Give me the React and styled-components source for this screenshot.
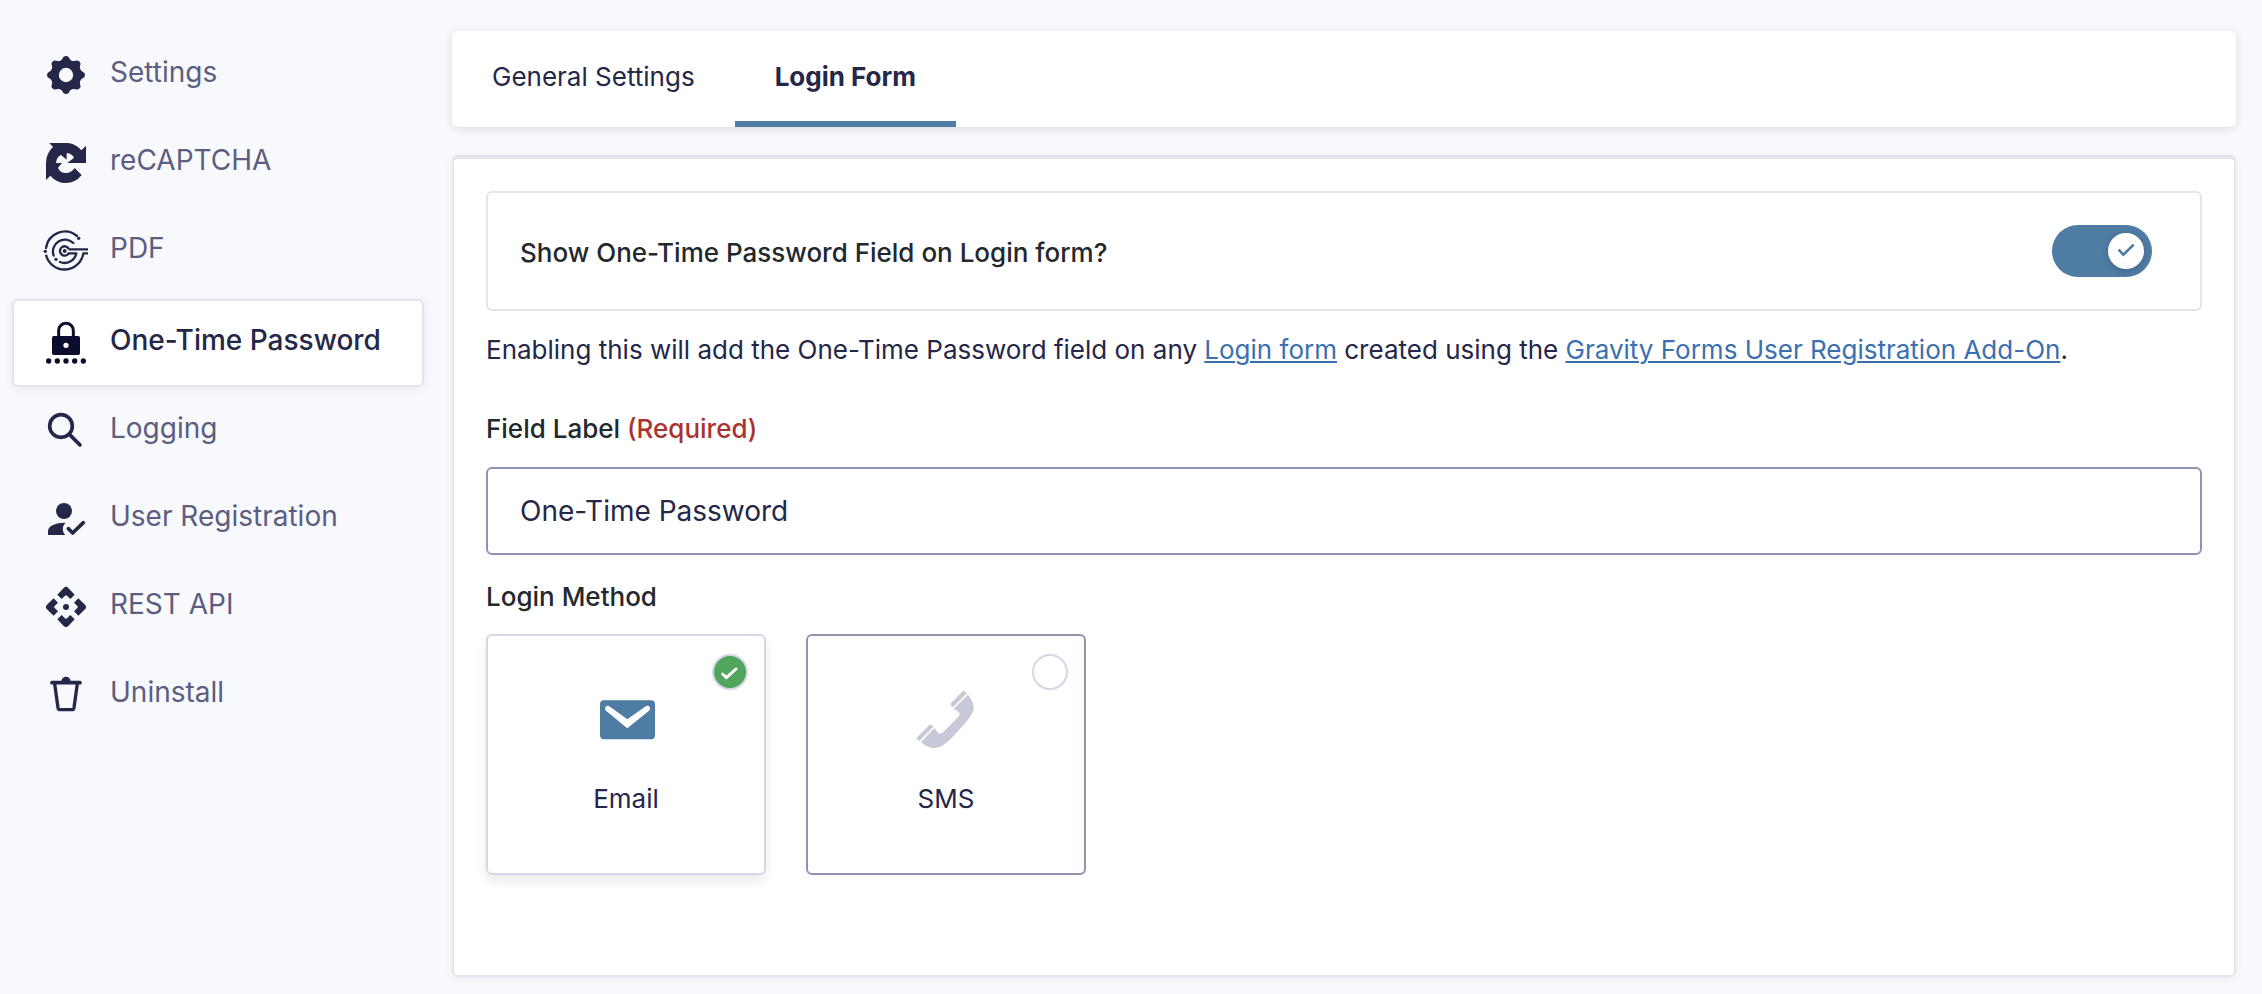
import React from "react";
import styled, { createGlobalStyle } from "styled-components";

const color = {
  page: "#f8f9fd",
  navy: "#242748",
  muted: "#5b5e80",
  text: "#23282d",
  accent: "#4f7ca3",
  link: "#3b70b0",
  danger: "#a9342f",
  line: "#e3e5ec",
  fieldLine: "#9092b2",
  softLine: "#d5d7e9",
  success: "#51a55c",
};

const GlobalStyle = createGlobalStyle`
  * { box-sizing: border-box; }
  body {
    margin: 0;
    background: ${color.page};
    color: ${color.navy};
    font-family: Inter, "Liberation Sans", sans-serif;
    font-size: 26px;
    line-height: 32px;
  }
`;

const Page = styled.div`
  display: flex;
  align-items: flex-start;
  gap: 28px;
  padding: 31px 26px 17px 12px;
`;

const Sidebar = styled.nav`
  flex: none;
  width: 412px;
`;

const NavList = styled.ul`
  margin: 0;
  padding: 0;
  list-style: none;
`;

const NavLink = styled.a`
  display: flex;
  align-items: center;
  gap: 24px;
  height: 88px;
  margin-top: ${(p) => (p.$active ? "4px" : "0")};
  padding: 0 32px;
  border: 2px solid ${(p) => (p.$active ? color.line : "transparent")};
  border-radius: 6px;
  background: ${(p) => (p.$active ? "#fff" : "transparent")};
  box-shadow: ${(p) => (p.$active ? "0 2px 8px rgba(36, 39, 72, 0.07)" : "none")};
  color: ${(p) => (p.$active ? color.navy : color.muted)};
  font-size: 28px;
  font-weight: ${(p) => (p.$active ? 500 : 400)};
  text-decoration: none;
`;

const NavText = styled.span`
  padding-bottom: 6px;
`;

const NavIcon = styled.svg`
  flex: none;
  width: 40px;
  height: 40px;
  overflow: visible;
  fill: ${color.navy};
`;

const Main = styled.main`
  flex: 1;
  min-width: 0;
`;

const Tabs = styled.nav`
  display: flex;
  border-radius: 6px;
  background: #fff;
  box-shadow: 0 2px 10px rgba(18, 25, 40, 0.12);
`;

const Tab = styled.a`
  padding: 30px 40px 28px;
  border-bottom: 6px solid ${(p) => (p.$active ? color.accent : "transparent")};
  color: ${color.navy};
  font-weight: ${(p) => (p.$active ? 700 : 400)};
  text-decoration: none;
`;

const Panel = styled.section`
  margin-top: 28px;
  padding: 32px 32px 100px;
  border: 2px solid ${color.line};
  border-top-width: 4px;
  border-radius: 6px;
  background: #fff;
  box-shadow: 0 2px 10px rgba(18, 25, 40, 0.05);
`;

const ToggleRow = styled.div`
  display: flex;
  align-items: center;
  justify-content: space-between;
  height: 120px;
  padding: 0 48px 0 32px;
  border: 2px solid ${color.line};
  border-radius: 6px;
`;

const ToggleLabel = styled.label`
  padding-top: 3px;
  color: ${color.text};
  font-weight: 500;
`;

const Switch = styled.span`
  position: relative;
  flex: none;
  display: flex;
`;

const SwitchInput = styled.input`
  appearance: none;
  width: 100px;
  height: 52px;
  margin: 0;
  border-radius: 26px;
  background: ${color.accent};
`;

const Knob = styled.svg`
  position: absolute;
  top: 8px;
  right: 8px;
  width: 36px;
  height: 36px;
  border-radius: 50%;
  background: #fff;
  box-shadow: 0 2px 6px rgba(18, 25, 40, 0.2);
  pointer-events: none;
`;

const Description = styled.p`
  margin: 23px 0 0;
`;

const Link = styled.a`
  color: ${color.link};
  text-decoration: underline;
  text-decoration-thickness: 2px;
  text-underline-offset: 2px;
`;

const Field = styled.div`
  margin-top: 47px;
`;

const FieldLabel = styled.label`
  display: block;
  color: ${color.text};
  font-weight: 500;
`;

const Required = styled.span`
  color: ${color.danger};
`;

const TextInput = styled.input`
  display: block;
  width: 100%;
  height: 88px;
  margin-top: 22px;
  padding: 0 32px;
  border: 2px solid ${color.fieldLine};
  border-radius: 6px;
  background: #fff;
  color: ${color.navy};
  font: inherit;
  font-size: 28px;
`;

const Choices = styled.fieldset`
  margin: 26px 0 0;
  padding: 0;
  border: 0;
`;

const ChoicesTitle = styled.legend`
  padding: 0;
  color: ${color.text};
  font-weight: 500;
`;

const ChoiceList = styled.div`
  display: flex;
  gap: 40px;
  margin-top: 21px;
`;

const Choice = styled.label`
  position: relative;
  display: flex;
  flex-direction: column;
  align-items: center;
  gap: 33px;
  width: 280px;
  padding: 54px 16px 58px;
  border: 2px solid ${(p) => (p.$selected ? color.softLine : color.fieldLine)};
  border-radius: 6px;
  background: #fff;
  box-shadow: ${(p) => (p.$selected ? "0 6px 12px rgba(18, 25, 40, 0.09)" : "none")};
`;

const Radio = styled.input`
  appearance: none;
  position: absolute;
  top: 18px;
  right: 16px;
  width: 36px;
  height: 36px;
  margin: 0;
  border: 2px solid ${color.softLine};
  border-radius: 50%;
  background: #fff;
  &:checked {
    background: ${color.success};
  }
`;

const RadioMark = styled.svg`
  position: absolute;
  top: 18px;
  right: 16px;
  width: 36px;
  height: 36px;
  pointer-events: none;
`;

const ChoiceArt = styled.svg`
  width: 60px;
  height: 60px;
`;

const quarters = [0, 90, 180, 270];
const eighths = [0, 45, 90, 135, 180, 225, 270, 315];

const icons = {
  gear: (
    <>
      <circle cx="60" cy="60" r="34" fill="none" stroke={color.navy} strokeWidth="25" />
      {eighths.map((a) => (
        <path key={a} transform={`rotate(${a} 60 60)`} d="M42 22L50 10Q52 3 60 3Q68 3 70 10L78 22V30H42Z" />
      ))}
    </>
  ),
  recaptcha: (
    <path
      fillRule="evenodd"
      d="M10 0H60C78 0 95 8 106 22L120 8V60H64L84 44Q78 32 62 30V50L45 36Q31 43 30 60H48L36 74Q42 90 60 90Q76 90 86 75L107 96Q88 120 60 120Q32 120 13 98L0 111V60Q0 31 21 12Z"
    />
  ),
  pdf: (
    <g fill="none" stroke={color.navy} strokeWidth="7">
      <path d="M0 51A57 57 0 0 1 93 15" strokeLinecap="round" />
      <path d="M0 71A57 57 0 0 0 112 67H126" strokeLinejoin="round" />
      <path d="M23 74A36 36 0 0 1 82 36" strokeLinecap="round" />
      <path d="M42 93A36 36 0 0 0 91 67H68" strokeLinecap="round" strokeLinejoin="round" />
      <path d="M69 55H126M69 55A14 14 0 1 0 68 67" />
      <g fill={color.navy} stroke="none">
        <circle cx="56" cy="60" r="6" />
        <circle cx="98" cy="22" r="5" />
        <circle cx="-2" cy="61" r="5" />
        <circle cx="30" cy="85" r="5" />
      </g>
    </g>
  ),
  lock: (
    <g fill="#0a0d2d">
      <path d="M38 42V22A22 21 0 0 1 82 22V42" fill="none" stroke="#0a0d2d" strokeWidth="9" />
      <path
        fillRule="evenodd"
        d="M23 39H97Q102 39 102 44V91Q102 96 97 96H23Q18 96 18 91V44Q18 39 23 39ZM60 59A8 8 0 1 0 60 75A8 8 0 1 0 60 59Z"
      />
      {[8, 34, 60, 86, 112].map((x) => (
        <circle key={x} cx={x} cy="114" r="8" />
      ))}
    </g>
  ),
  search: (
    <g fill="none" stroke={color.navy} strokeWidth="11" strokeLinecap="round">
      <circle cx="45" cy="45" r="34" />
      <path d="M74 74L102 102" />
    </g>
  ),
  user: (
    <>
      <circle cx="54" cy="36" r="24" />
      <path d="M6 108V96C6 80 32 71 54 71H59C48 80 48 98 58 108Z" />
      <path
        d="M67 89L80 102L112 71"
        fill="none"
        stroke={color.navy}
        strokeWidth="11"
        strokeLinecap="round"
        strokeLinejoin="round"
      />
    </>
  ),
  api: (
    <>
      <circle cx="60" cy="60" r="9" />
      {quarters.map((a) => (
        <path key={a} transform={`rotate(${a} 60 60)`} d="M34 23L53 3Q60 -4 67 3L86 23L73 36L63 26Q60 23 57 26L47 36Z" />
      ))}
    </>
  ),
  trash: (
    <g stroke={color.navy} strokeLinecap="round" strokeLinejoin="round">
      <path d="M46 20A14 15 0 0 1 74 20Z" stroke="none" />
      <path d="M18 23H102" strokeWidth="11" />
      <path d="M26 26L36 98Q37 104 42 104H78Q83 104 84 98L94 26" fill="none" strokeWidth="10" />
    </g>
  ),
};

const navItems = [
  { label: "Settings", icon: "gear" },
  { label: "reCAPTCHA", icon: "recaptcha" },
  { label: "PDF", icon: "pdf" },
  { label: "One-Time Password", icon: "lock", active: true },
  { label: "Logging", icon: "search" },
  { label: "User Registration", icon: "user" },
  { label: "REST API", icon: "api" },
  { label: "Uninstall", icon: "trash" },
];

const methods = [
  {
    id: "email",
    label: "Email",
    art: (
      <g transform="translate(12 31)">
        <rect width="165" height="117" rx="12" fill={color.accent} />
        <path
          fill="#fff"
          d="M17 19Q22 14 30 19L82 57L135 19Q143 14 149 19Q152 25 147 31L82 84L18 31Q13 25 17 19Z"
        />
      </g>
    ),
  },
  {
    id: "sms",
    label: "SMS",
    art: (
      <g transform="translate(2 3)" fill="#c7c8d8">
        <path d="M138 1Q142 -2 146 2L151 7L109 49L103 43Q100 40 103 36Z" />
        <path d="M38 102Q42 99 46 102L50 107L8 150L2 145Q-1 142 2 138Z" />
        <path d="M154 11Q171 32 171 52C171 66 155 86 137 106C110 135 84 171 53 171Q32 171 13 153L53 111L65 126Q71 131 80 123L125 77Q133 69 126 63L111 53Z" />
      </g>
    ),
  },
];

export default function App() {
  const [method, setMethod] = React.useState("email");

  return (
    <>
      <GlobalStyle />
      <Page>
        <Sidebar aria-label="Settings sections">
          <NavList>
            {navItems.map((item) => (
              <li key={item.label}>
                <NavLink href="#" $active={item.active} aria-current={item.active ? "page" : undefined}>
                  <NavIcon viewBox="0 0 120 120" aria-hidden="true">
                    {icons[item.icon]}
                  </NavIcon>
                  <NavText>{item.label}</NavText>
                </NavLink>
              </li>
            ))}
          </NavList>
        </Sidebar>
        <Main>
          <Tabs aria-label="One-Time Password settings">
            <Tab href="#">General Settings</Tab>
            <Tab href="#" $active aria-current="page">
              Login Form
            </Tab>
          </Tabs>
          <Panel>
            <ToggleRow>
              <ToggleLabel htmlFor="show-field">Show One-Time Password Field on Login form?</ToggleLabel>
              <Switch>
                <SwitchInput id="show-field" type="checkbox" role="switch" defaultChecked />
                <Knob viewBox="0 0 108 108" aria-hidden="true">
                  <path d="M32 50L46 65L77 35" fill="none" stroke={color.accent} strokeWidth="8" />
                </Knob>
              </Switch>
            </ToggleRow>
            <Description>
              Enabling this will add the One-Time Password field on any <Link href="#">Login form</Link> created using
              the <Link href="#">Gravity Forms User Registration Add-On</Link>.
            </Description>
            <Field>
              <FieldLabel htmlFor="field-label">
                Field Label <Required>(Required)</Required>
              </FieldLabel>
              <TextInput id="field-label" type="text" defaultValue="One-Time Password" required />
            </Field>
            <Choices>
              <ChoicesTitle>Login Method</ChoicesTitle>
              <ChoiceList>
                {methods.map((m) => (
                  <Choice key={m.id} $selected={method === m.id}>
                    <Radio
                      type="radio"
                      name="login-method"
                      value={m.id}
                      checked={method === m.id}
                      onChange={() => setMethod(m.id)}
                    />
                    {method === m.id && (
                      <RadioMark viewBox="0 0 108 108" aria-hidden="true">
                        <path
                          d="M32 60L43 71L72 45"
                          fill="none"
                          stroke="#fff"
                          strokeWidth="9"
                          strokeLinecap="round"
                          strokeLinejoin="round"
                        />
                      </RadioMark>
                    )}
                    <ChoiceArt viewBox="0 0 180 180" aria-hidden="true">
                      {m.art}
                    </ChoiceArt>
                    {m.label}
                  </Choice>
                ))}
              </ChoiceList>
            </Choices>
          </Panel>
        </Main>
      </Page>
    </>
  );
}
